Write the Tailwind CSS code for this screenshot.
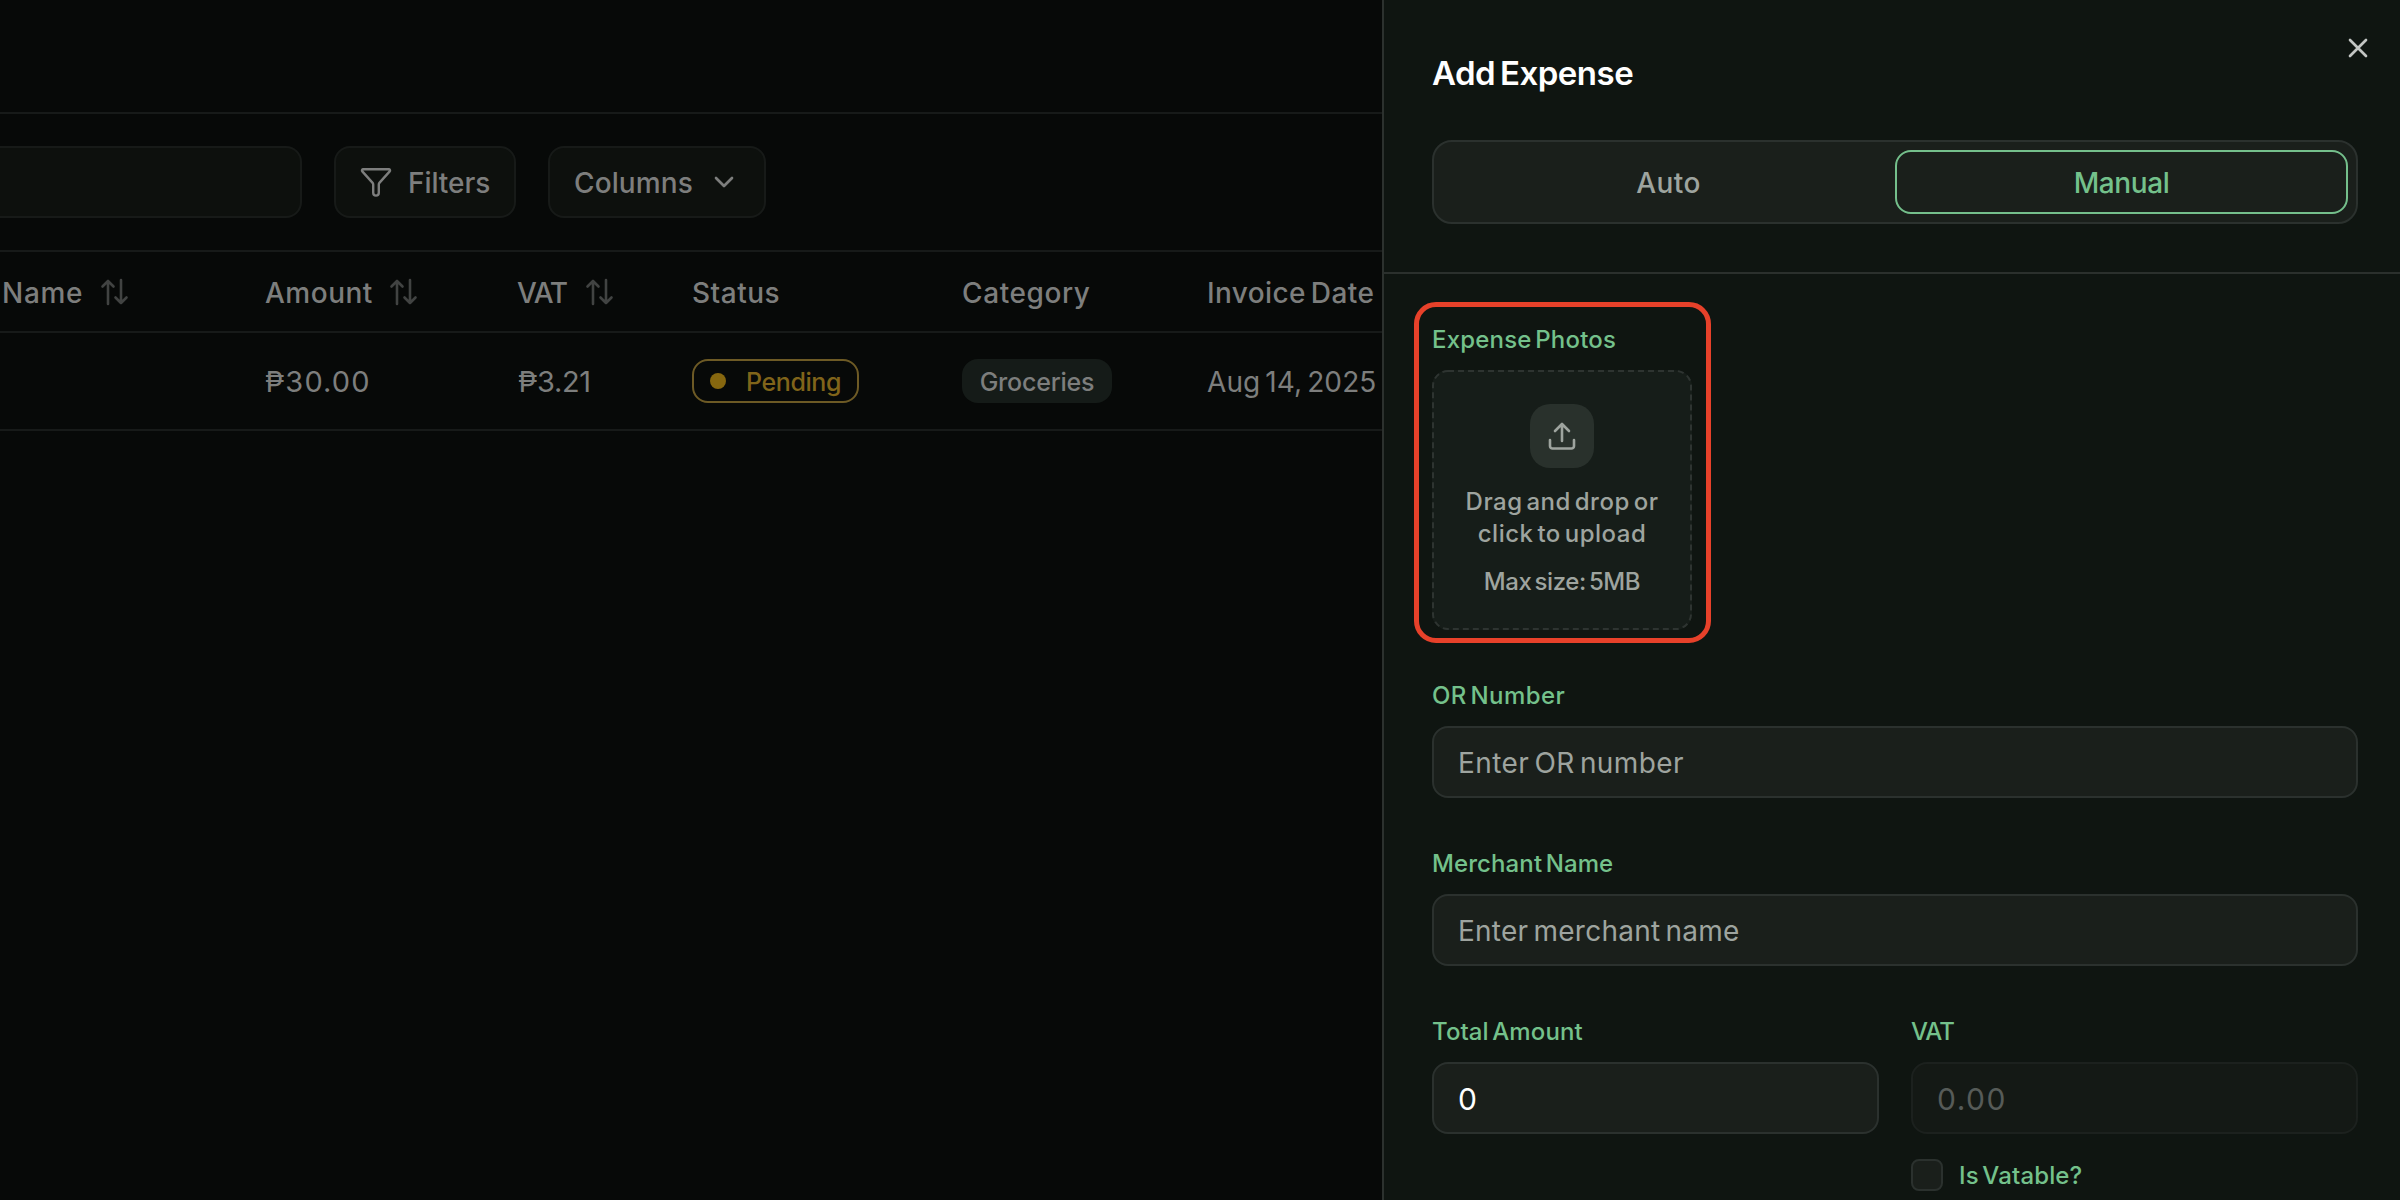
<!DOCTYPE html>
<html lang="en">
<head>
<meta charset="utf-8">
<title>Add Expense</title>
<script src="https://cdn.jsdelivr.net/npm/@tailwindcss/browser@4"></script>
</head>
<body class="w-[2400px] h-[1200px] overflow-hidden bg-[#070908] font-['Inter',sans-serif] text-[28px] leading-9 [word-spacing:-3px] flex">
<svg class="hidden">
  <symbol id="sort" viewBox="0 0 30 30"><path d="M8 27V4M2.500 9.500L8 4l5.500 5.500M21 3v23M15.500 20.500L21 26l5.500-5.500" fill="none" stroke="currentColor" stroke-width="2.600" stroke-linecap="round" stroke-linejoin="round"/></symbol>
</svg>

<main class="w-[1382px] h-full shrink-0 overflow-hidden text-[#7d7e7d] font-medium whitespace-nowrap">
  <div class="h-[114px] border-b-2 border-[#171a19]"></div>

  <div class="h-[138px] border-b-2 border-[#171a19] flex items-center gap-8">
    <div class="w-[302px] h-[72px] rounded-r-2xl border-2 border-l-0 border-[#171a18] bg-[#0d100d]"></div>
    <button class="w-[182px] h-[72px] rounded-2xl border-2 border-[#171a18] bg-[#0d100d] flex items-center pl-[23px] gap-[15px]">
      <svg class="w-[34px] h-[34px]" viewBox="0 0 34 34" fill="none" stroke="currentColor" stroke-width="2.400" stroke-linejoin="round"><path d="M4.300 4.200h25.400a1.300 1.300 0 0 1 1 2.200L20.600 17.600a3 3 0 0 0-.8 2v8.200a2.800 2.800 0 0 1-5.600 0v-8.200a3 3 0 0 0-.8-2L3.300 6.400a1.300 1.300 0 0 1 1-2.200z"/></svg>
      <span class="pt-0.5 tracking-[-0.05px]">Filters</span>
    </button>
    <button class="w-[218px] h-[72px] rounded-2xl border-2 border-[#171a18] bg-[#0d100d] flex items-center pl-6 gap-[15px]">
      <span class="pt-0.5 tracking-[0.1px]">Columns</span>
      <svg class="w-8 h-8" viewBox="0 0 24 24" fill="none" stroke="currentColor" stroke-width="2" stroke-linecap="round" stroke-linejoin="round"><path d="m6 9 6 6 6-6"/></svg>
    </button>
  </div>

  <div class="h-[81px] border-b-2 border-[#171a19] pt-0.5 grid grid-cols-[264px_253px_175px_270px_245px_1fr] items-center">
    <div class="flex items-center gap-[17px] pl-0.5"><span class="tracking-[0.7px]">Name</span><svg class="w-[30px] h-[30px] text-[#414342] -mt-0.5"><use href="#sort"/></svg></div>
    <div class="flex items-center gap-4 pl-px"><span class="tracking-[0.5px]">Amount</span><svg class="w-[30px] h-[30px] text-[#414342] -mt-0.5"><use href="#sort"/></svg></div>
    <div class="flex items-center gap-[18px]"><span class="tracking-[-1.2px]">VAT</span><svg class="w-[30px] h-[30px] text-[#414342] -mt-0.5"><use href="#sort"/></svg></div>
    <div class="tracking-[0.5px]">Status</div>
    <div class="tracking-[0.6px]">Category</div>
    <div class="tracking-[0.4px]">Invoice Date</div>
  </div>

  <div class="h-[98px] border-b-2 border-[#171a19] grid grid-cols-[264px_253px_175px_270px_245px_1fr] items-center font-normal">
    <div></div>
    <div class="pt-0.5 tracking-[1.1px] pl-px text-[29px]">₱30.00</div>
    <div class="pt-0.5 tracking-[-0.3px] pl-px text-[29px]">₱3.21</div>
    <div><div class="w-[167px] h-11 rounded-2xl border-2 border-[#6d5a25] text-[#80641a] text-[25px] font-medium flex items-center pl-4 gap-5"><i class="size-4 rounded-full bg-[#86670f]"></i><span class="pt-0.5 tracking-[-0.4px]">Pending</span></div></div>
    <div><div class="w-[150px] h-11 pt-0.5 rounded-2xl bg-[#151b18] text-[25px] font-medium flex items-center justify-center tracking-[-0.2px]">Groceries</div></div>
    <div class="pt-0.5 tracking-[0.1px]">Aug 14, 2025</div>
  </div>
</main>

<aside class="relative w-[1018px] h-full shrink-0 overflow-hidden bg-[#0f1511] border-l-2 border-[#2c312e] whitespace-nowrap">
  <svg class="absolute right-[26px] top-8 w-8 h-8 text-[#c3c6c4]" viewBox="0 0 24 24" fill="none" stroke="currentColor" stroke-width="2" stroke-linecap="round"><path d="M18 6 6 18M6 6l12 12"/></svg>

  <header class="h-[274px] border-b-2 border-[#2b302d] pl-12 pr-[42px] pt-[55px]">
    <h1 class="text-[33px] leading-9 font-semibold text-white tracking-[-0.5px]">Add Expense</h1>
    <div class="mt-[49px] h-[84px] rounded-[20px] border-2 border-[#2b312e] bg-[#1a1f1b] p-2 grid grid-cols-2 font-medium">
      <div class="flex items-center justify-center text-[#9ea49f] tracking-[0.4px] pt-0.5">Auto</div>
      <div class="flex items-center justify-center rounded-2xl border-2 border-[#74bf8b] text-[#74c18b] tracking-[-0.4px] pt-0.5">Manual</div>
    </div>
  </header>

  <form class="pl-12 pr-[42px] text-[#74c18b] font-medium">
    <section class="relative h-[404px] pt-[50px] text-2xl leading-8">
      <div class="tracking-[0.2px]">Expense Photos</div>
      <div class="mt-[14px] size-[260px] rounded-2xl bg-[#161d19] text-[#9ea49f] flex flex-col items-center pt-[34px] relative">
        <svg class="absolute inset-0 size-[260px]" fill="none"><rect x="1" y="1" width="258" height="258" rx="15" stroke="#2e3431" stroke-width="2" stroke-dasharray="6 4"/></svg>
        <div class="size-16 rounded-[20px] bg-[#29312c] flex items-center justify-center">
          <svg class="size-8" viewBox="0 0 32 32" fill="none" stroke="currentColor" stroke-width="2.600" stroke-linecap="round" stroke-linejoin="round"><path d="M16 21V4.500M9 11l7-7 7 7M4 20v6a2.500 2.500 0 0 0 2.500 2.500h19A2.500 2.500 0 0 0 28 26v-6"/></svg>
        </div>
        <div class="mt-[18px] text-center tracking-[0.5px]">Drag and drop or<br>click to upload</div>
        <div class="mt-4 tracking-[-0.4px]">Max size: 5MB</div>
      </div>
      <div class="absolute left-[-18px] top-7 w-[297px] h-[341px] rounded-[22px] border-5 border-[#e7412a]"></div>
    </section>

    <label class="block h-[168px]">
      <span class="block pt-[2px] text-2xl leading-8 tracking-[0.4px]">OR Number</span>
      <span class="mt-[14px] h-[72px] rounded-2xl border-2 border-[#2b312e] bg-[#1a1f1b] px-6 pt-0.5 flex items-center text-[#9ea49f] font-normal tracking-[0.4px]">Enter OR number</span>
    </label>
    <label class="block h-[168px]">
      <span class="block pt-[2px] text-2xl leading-8 tracking-[0.1px]">Merchant Name</span>
      <span class="mt-[14px] h-[72px] rounded-2xl border-2 border-[#2b312e] bg-[#1a1f1b] px-6 pt-0.5 flex items-center text-[#9ea49f] font-normal tracking-[0.25px]">Enter merchant name</span>
    </label>
    <div class="grid grid-cols-2 gap-8">
      <label class="block">
        <span class="block pt-[2px] text-2xl leading-8 tracking-[0.1px]">Total Amount</span>
        <span class="mt-[14px] h-[72px] rounded-2xl border-2 border-[#2b312e] bg-[#1a1f1b] px-6 pt-0.5 flex items-center text-white font-normal text-[30px]">0</span>
      </label>
      <div>
        <span class="block pt-[2px] text-2xl leading-8 tracking-[-1px]">VAT</span>
        <span class="mt-[14px] h-[72px] rounded-2xl border-2 border-[#1c211e] bg-[#141915] px-6 pt-0.5 flex items-center text-[#565b58] font-normal text-[30px] tracking-[1.5px]">0.00</span>
        <label class="mt-6 flex items-center gap-4 text-2xl leading-8">
          <i class="size-8 rounded-lg border-2 border-[#2b312e] bg-[#1a1f1b]"></i>
          <span class="pt-0.5 tracking-[0.15px]">Is Vatable?</span>
        </label>
      </div>
    </div>
  </form>
</aside>
</body>
</html>
